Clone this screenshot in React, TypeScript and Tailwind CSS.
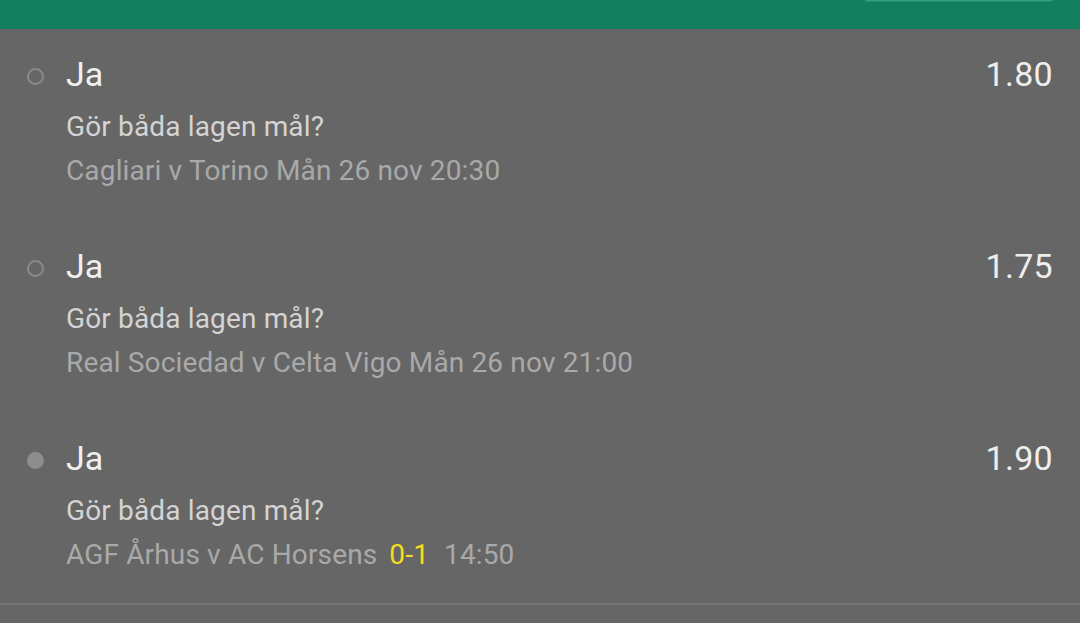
import React from "react";

type Bet = {
  pick: string;
  odds: string;
  market: string;
  event: string;
  score?: string;
  time?: string;
  live?: boolean;
};

const bets: Bet[] = [
  { pick: "Ja", odds: "1.80", market: "Gör båda lagen mål?", event: "Cagliari v Torino Mån 26 nov 20:30" },
  { pick: "Ja", odds: "1.75", market: "Gör båda lagen mål?", event: "Real Sociedad v Celta Vigo Mån 26 nov 21:00" },
  { pick: "Ja", odds: "1.90", market: "Gör båda lagen mål?", event: "AGF Århus v AC Horsens", score: "0-1", time: "14:50", live: true },
];

function BetRow({ bet }: { bet: Bet }) {
  return (
    <div className="flex pt-[27px] pb-[32px] pr-[27px]">
      {/* status dot */}
      <div className="w-[66px] pl-[27px]">
        <div className="h-[36px] flex items-center translate-y-[2px]">
          {bet.live ? (
            <span className="block w-[17px] h-[17px] rounded-full bg-[#8d8d8d]" />
          ) : (
            <span className="block w-[17px] h-[17px] rounded-full border-2 border-[#8a8a8a]" />
          )}
        </div>
      </div>
      <div className="flex-1 min-w-0">
        <div className="flex items-center justify-between h-[36px]">
          <span className="text-[34px] text-[#f0f0f0]">{bet.pick}</span>
          <span className="text-[34px] text-[#eeeeee] tracking-[0.3px]">{bet.odds}</span>
        </div>
        <div className="mt-[17px] h-[36px] flex items-center text-[28px] text-[#d4d4d4] tracking-[0.15px]">{bet.market}</div>
        <div className="mt-[8px] h-[36px] flex items-center text-[28px] text-[#a9a9a9] whitespace-nowrap tracking-[0.15px]">
          <span>{bet.event}</span>
          {bet.score && <span className="ml-[12px] text-[#f6dc1a]">{bet.score}</span>}
          {bet.time && <span className="ml-[15px]">{bet.time}</span>}
        </div>
      </div>
    </div>
  );
}

export default function App() {
  return (
    <div className="w-[1080px] h-[623px] overflow-hidden bg-[#666666] font-['Roboto',sans-serif]">
      {/* Top bar */}
      <div className="h-[29px] bg-[#147f5f] flex justify-end pr-[27px]">
        <div className="w-[188px] h-[2px] bg-[#2fa37a] rounded-b-[2px] border-b border-[#1f9069]" />
      </div>
      <div>
        {bets.map((b, i) => (
          <BetRow key={i} bet={b} />
        ))}
      </div>
      <div className="h-[2px] bg-[#737373] -mt-[2px]" />
    </div>
  );
}
